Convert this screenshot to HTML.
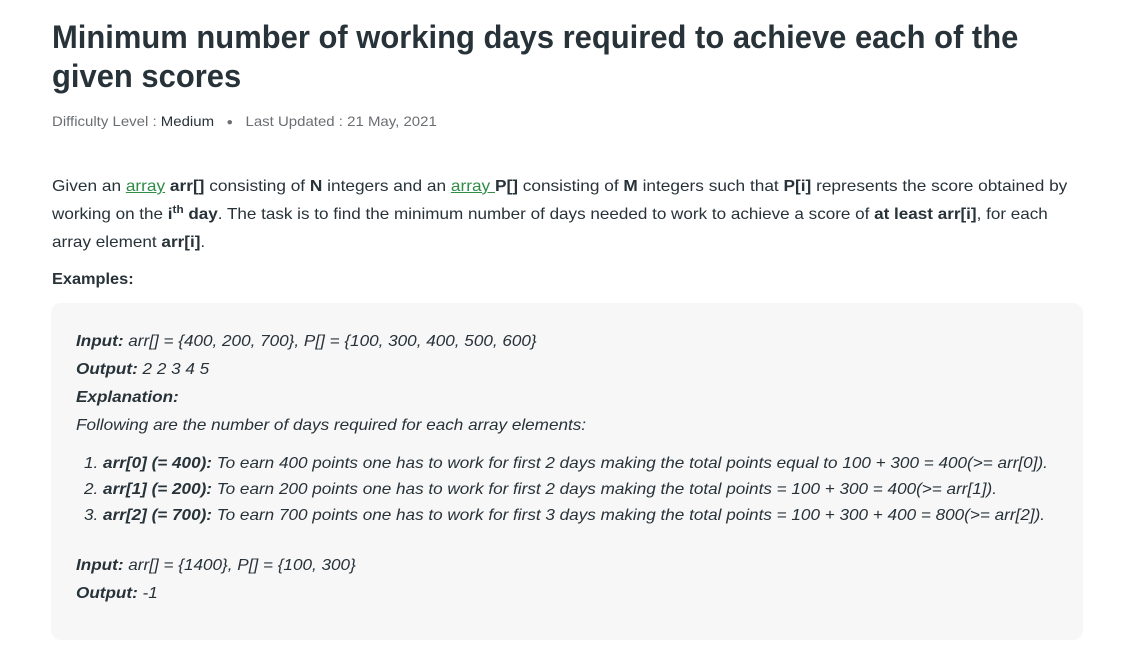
<!DOCTYPE html>
<html><head><meta charset="utf-8"><style>
body{margin:0;background:#fff;font-family:"Liberation Sans",sans-serif;color:#273239;width:1135px;height:652px;overflow:hidden;position:relative}
.a{position:absolute;white-space:nowrap;line-height:20px}
h1{position:absolute;left:52px;top:18px;margin:0;font-size:32px;font-weight:bold;line-height:39px;transform-origin:0 0;transform:scaleX(0.967);color:#273239;white-space:nowrap}
.meta{left:52px;top:111px;font-size:14px;color:#6b6f73;transform-origin:0 0;transform:scaleX(1.07)}
.meta b{font-weight:normal;color:#273239}
.p{left:52px;font-size:16px;color:#273239;transform-origin:0 0}
a{color:#2f8d46;text-decoration:underline}
sup{font-size:11px;line-height:0;vertical-align:6px}
.box{position:absolute;left:51px;top:303px;width:1032px;height:337px;background:#f7f7f7;border-radius:10px}
.e{left:76px;font-size:16px;font-style:italic;color:#273239;transform-origin:0 0;transform:scaleX(1.07)}
</style></head><body>
<h1>Minimum number of working days required to achieve each of the<br>given scores</h1>
<div class="a meta">Difficulty Level : <b>Medium</b> &nbsp;&nbsp;<span style="font-size:10px;position:relative;top:-1px">●</span>&nbsp;&nbsp; Last Updated : 21 May, 2021</div>
<div class="a p" style="top:177px;transform:scaleX(1.078)">Given an <a>array</a> <b>arr[]</b> consisting of <b>N</b> integers and an <a>array </a><b>P[]</b> consisting of <b>M</b> integers such that <b>P[i]</b> represents the score obtained by</div>
<div class="a p" style="top:205px;transform:scaleX(1.067)">working on the <b>i<sup>th</sup> day</b>. The task is to find the minimum number of days needed to work to achieve a score of <b>at least arr[i]</b>, for each</div>
<div class="a p" style="top:233px;transform:scaleX(1.07)">array element <b>arr[i]</b>.</div>
<div class="a p" style="top:270px;font-weight:bold;transform:scaleX(1.02)">Examples:</div>
<div class="box"></div>
<div class="a e" style="top:332px"><b>Input:</b> arr[] = {400, 200, 700}, P[] = {100, 300, 400, 500, 600}</div>
<div class="a e" style="top:360px"><b>Output:</b> 2 2 3 4 5</div>
<div class="a e" style="top:388px"><b>Explanation:</b></div>
<div class="a e" style="top:416px">Following are the number of days required for each array elements:</div>
<div class="a e" style="top:454px;left:84px">1. <b>arr[0] (= 400):</b> To earn 400 points one has to work for first 2 days making the total points equal to 100 + 300 = 400(&gt;= arr[0]).</div>
<div class="a e" style="top:480px;left:84px">2. <b>arr[1] (= 200):</b> To earn 200 points one has to work for first 2 days making the total points = 100 + 300 = 400(&gt;= arr[1]).</div>
<div class="a e" style="top:506px;left:84px">3. <b>arr[2] (= 700):</b> To earn 700 points one has to work for first 3 days making the total points = 100 + 300 + 400 = 800(&gt;= arr[2]).</div>
<div class="a e" style="top:556px"><b>Input:</b> arr[] = {1400}, P[] = {100, 300}</div>
<div class="a e" style="top:584px"><b>Output:</b> -1</div>
</body></html>
